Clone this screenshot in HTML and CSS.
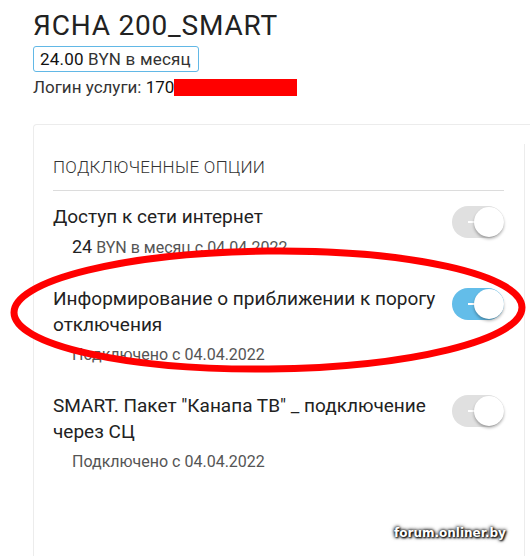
FILE: index.html
```html
<!DOCTYPE html>
<html lang="ru">
<head>
    <meta charset="UTF-8">
    <meta name="viewport" content="width=device-width, initial-scale=1.0">
    <title>ЯСНА 200_SMART</title>
    <link rel="stylesheet" href="styles.css">
</head>
<body>
    <div class="page">
        <h1 class="tariff-name">ЯСНА 200_SMART</h1>
        <div class="price-badge"><span class="num">24.00</span> BYN в месяц</div>
        <div class="login">Логин услуги: <span class="num">170</span><span class="redacted"></span></div>

        <div class="card">
            <div class="options">
                <div class="options-title">Подключенные опции</div>

                <div class="option">
                    <div class="option-text">
                        <div class="option-name">Доступ к сети интернет</div>
                        <div class="option-info"><span class="num">24</span> BYN в месяц с 04.04.2022</div>
                    </div>
                    <span class="switch"></span>
                </div>

                <div class="option">
                    <div class="option-text">
                        <div class="option-name">Информирование о приближении к порогу отключения</div>
                        <div class="option-info">Подключено с 04.04.2022</div>
                    </div>
                    <span class="switch on"></span>
                </div>

                <div class="option">
                    <div class="option-text">
                        <div class="option-name">SMART. Пакет "Канапа ТВ" _ подключение через СЦ</div>
                        <div class="option-info">Подключено с 04.04.2022</div>
                    </div>
                    <span class="switch"></span>
                </div>
            </div>
        </div>
    </div>

    <!-- red marker drawn over the screenshot -->
    <svg class="marker" width="530" height="557" viewBox="0 0 530 557">
        <ellipse cx="268" cy="310" rx="254" ry="59" fill="none" stroke="#ff0000" stroke-width="7" transform="rotate(-0.6 268 310)"/>
    </svg>

    <div class="watermark">forum.onliner.by</div>
</body>
</html>
```

FILE: styles.css
```css
body {
    margin: 0;
    font-family: Roboto, "Noto Sans", sans-serif;
    color: #222;
    background: #fff;
    overflow: hidden;
    height: 557px;
}
.page {
    padding: 8px 0 0 33px;
}
.tariff-name {
    margin: 0;
    font-size: 28px;
    font-weight: 400;
    letter-spacing: 0.8px;
    line-height: 35px;
    color: #222;
}
.price-badge {
    display: inline-block;
    margin-top: 3px;
    padding: 0 7px 0 6px;
    height: 24px;
    line-height: 24px;
    border: 1px solid #62b8e6;
    border-radius: 3px;
    font-size: 17px;
    letter-spacing: 0.2px;
    color: #333;
}
.num {
    color: #111;
}
.login {
    margin-top: 5px;
    font-size: 17px;
    line-height: 20px;
    color: #333;
}
.redacted {
    display: inline-block;
    width: 123px;
    height: 17px;
    background: #ff0000;
    vertical-align: -3px;
}
.card {
    margin-top: 27px;
    margin-right: -10px;
    height: 431px;
    border: 1px solid #ececec;
    border-bottom: none;
    border-radius: 4px 0 0 0;
}
.options {
    margin: 19px 0 0 19px;
    width: 451px;
    height: 412px;
    padding-right: 20px;
    border-right: 1px solid #ececec;
}
.options-title {
    padding-top: 13px;
    padding-bottom: 13px;
    font-size: 17px;
    font-weight: 300;
    letter-spacing: 0.3px;
    text-transform: uppercase;
    color: #333;
    border-bottom: 1px solid #dcdcdc;
}
.option {
    display: flex;
    justify-content: space-between;
    align-items: flex-start;
    padding-top: 13px;
    margin-bottom: 15px;
}
.option-text {
    width: 385px;
}
.option-name {
    font-size: 19px;
    line-height: 26px;
    color: #222;
}
.option-info {
    margin-top: 7px;
    padding-left: 19px;
    font-size: 16px;
    line-height: 20px;
    color: #555;
}
.option-info .num {
    font-size: 18px;
    color: #222;
}
.switch {
    position: relative;
    flex: none;
    margin-top: 2px;
    width: 52px;
    height: 32px;
    border-radius: 16px;
    background: #e0e0e0;
}
.switch.on {
    background: #63bde9;
}
.switch::before {
    content: "";
    position: absolute;
    left: 16px;
    top: 15px;
    width: 8px;
    height: 2px;
    background: #fff;
}
.switch::after {
    content: "";
    position: absolute;
    right: 0;
    top: 1px;
    width: 30px;
    height: 30px;
    border-radius: 50%;
    background: #fff;
    box-shadow: 0 2px 3px rgba(0, 0, 0, 0.3);
}
.marker {
    position: absolute;
    left: 0;
    top: 0;
    pointer-events: none;
}
.watermark {
    position: absolute;
    left: 394px;
    top: 526px;
    font-family: "DejaVu Sans", sans-serif;
    font-size: 12px;
    font-weight: bold;
    color: #fff;
    text-shadow: 0 0 3px #000, 0 0 4px #000, 1px 1px 2px #000;
}
```
